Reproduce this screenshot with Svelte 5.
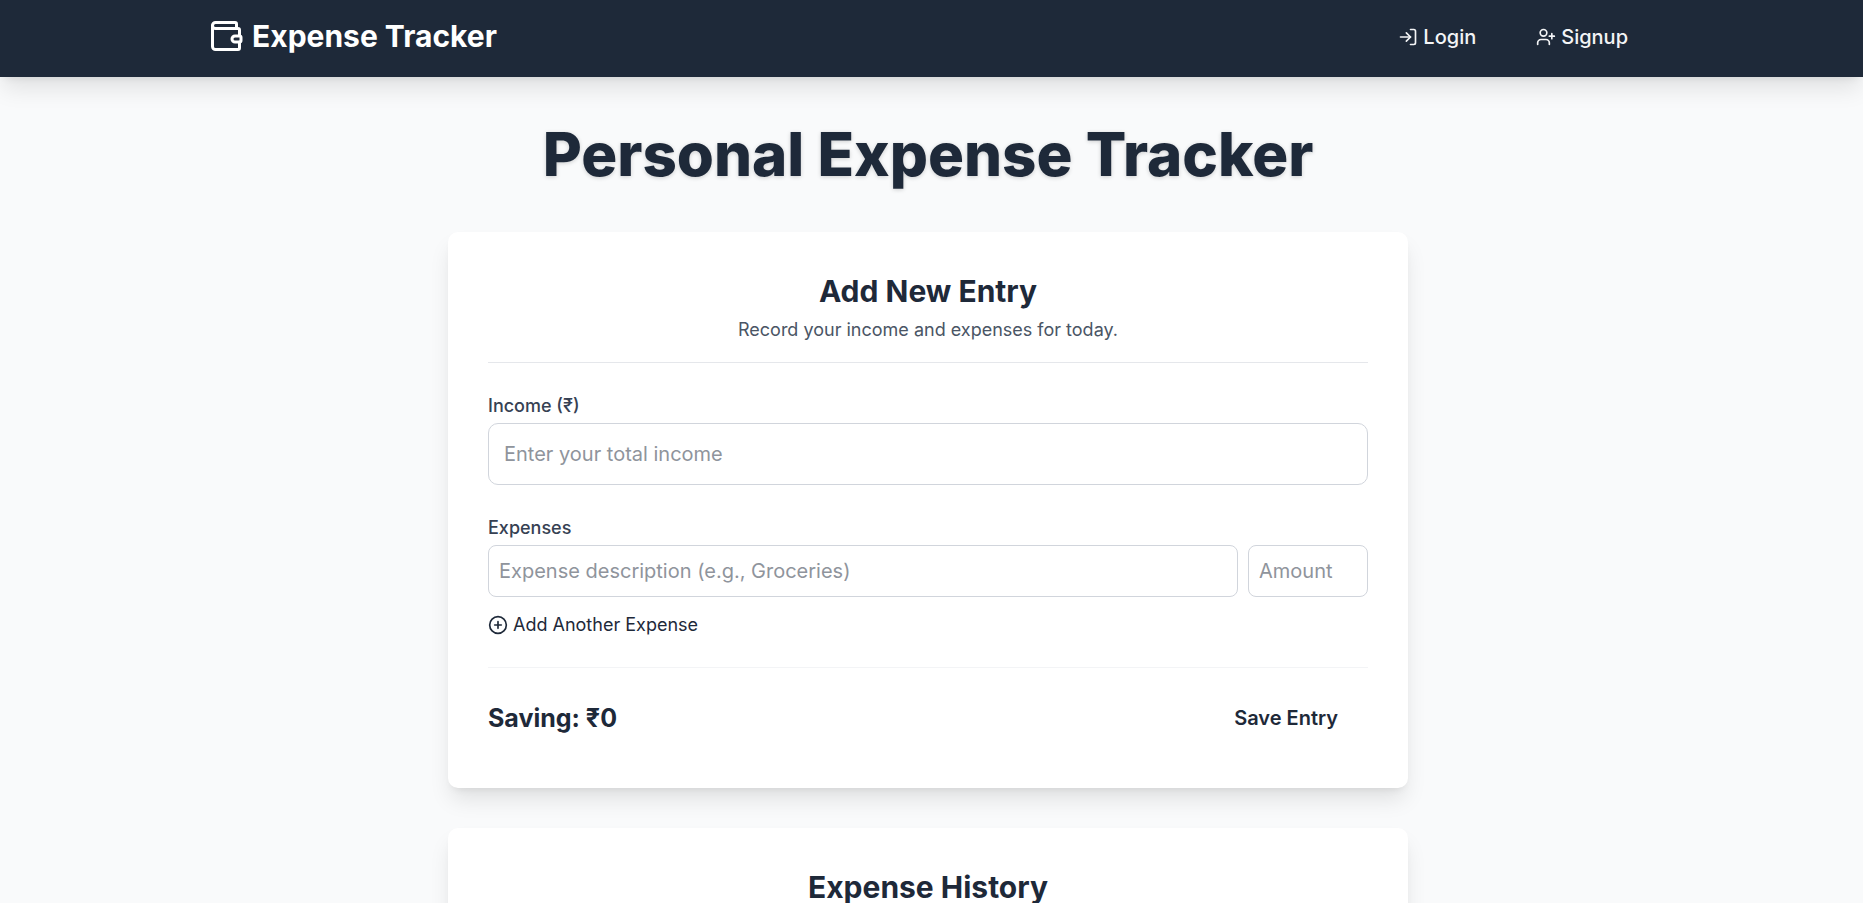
<script>
  let income = $state('');
  let expenses = $state([{ description: '', amount: '' }]);

  let saving = $derived(
    Number(income || 0) - expenses.reduce((sum, item) => sum + Number(item.amount || 0), 0)
  );

  function addExpense() {
    expenses.push({ description: '', amount: '' });
  }
</script>

<header class="topbar">
  <div class="topbar-inner">
    <a class="brand" href="#home">
      <svg class="icon brand-icon" viewBox="0 0 24 24" aria-hidden="true">
        <path d="M19 7V4a1 1 0 0 0-1-1H5a2 2 0 0 0 0 4h15a1 1 0 0 1 1 1v4h-3a2 2 0 0 0 0 4h3a1 1 0 0 0 1-1v-2a1 1 0 0 0-1-1" />
        <path d="M3 5v14a2 2 0 0 0 2 2h15a1 1 0 0 0 1-1v-4" />
      </svg>
      Expense Tracker
    </a>
    <nav class="links">
      <a class="link" href="#login">
        <svg class="icon" viewBox="0 0 24 24" aria-hidden="true">
          <path d="M15 3h4a2 2 0 0 1 2 2v14a2 2 0 0 1-2 2h-4" />
          <path d="M10 17l5-5-5-5" />
          <path d="M15 12H3" />
        </svg>
        Login
      </a>
      <a class="link" href="#signup">
        <svg class="icon" viewBox="0 0 24 24" aria-hidden="true">
          <path d="M16 21v-2a4 4 0 0 0-4-4H6a4 4 0 0 0-4 4v2" />
          <circle cx="9" cy="7" r="4" />
          <path d="M19 8v6M22 11h-6" />
        </svg>
        Signup
      </a>
    </nav>
  </div>
</header>

<main class="page">
  <h1>Personal Expense Tracker</h1>

  <section class="card">
    <div class="card-head">
      <h2>Add New Entry</h2>
      <p>Record your income and expenses for today.</p>
    </div>

    <form onsubmit={(event) => event.preventDefault()}>
      <div class="field">
        <label for="income">Income (₹)</label>
        <input id="income" class="large" type="text" inputmode="decimal" placeholder="Enter your total income" bind:value={income} />
      </div>

      <div class="field">
        <label for="expense-0">Expenses</label>
        <div class="rows">
          {#each expenses as item, i}
            <div class="row">
              <input id={`expense-${i}`} type="text" placeholder="Expense description (e.g., Groceries)" bind:value={item.description} />
              <input class="amount" type="text" inputmode="decimal" aria-label="Amount" placeholder="Amount" bind:value={item.amount} />
            </div>
          {/each}
        </div>
        <button class="add" type="button" onclick={addExpense}>
          <svg class="icon" viewBox="0 0 24 24" aria-hidden="true">
            <circle cx="12" cy="12" r="10" />
            <path d="M8 12h8M12 8v8" />
          </svg>
          Add Another Expense
        </button>
      </div>

      <div class="summary">
        <strong>Saving: ₹{saving}</strong>
        <button class="save" type="submit">Save Entry</button>
      </div>
    </form>
  </section>

  <section class="card">
    <h2>Expense History</h2>
  </section>
</main>

<style>
  :global(body) {
    background: #f9fafb;
    color: #1e2939;
    font-family: Inter, 'Noto Sans', sans-serif;
    font-size: 20px;
    line-height: 30px;
    overflow: hidden;
  }

  * {
    box-sizing: border-box;
  }

  h1,
  h2,
  p {
    margin: 0;
  }

  .icon {
    width: 20px;
    height: 20px;
    flex: none;
    fill: none;
    stroke: currentColor;
    stroke-width: 2;
    stroke-linecap: round;
    stroke-linejoin: round;
  }

  .topbar {
    padding: 18px 7px 22px 0;
    background: #1e2939;
    box-shadow: 0 14px 22px -3px rgb(0 0 0 / 0.1), 0 5px 8px -5px rgb(0 0 0 / 0.1);
  }

  .topbar-inner {
    display: flex;
    align-items: flex-start;
    justify-content: space-between;
    max-width: 1440px;
    height: 37px;
    margin: 0 auto;
  }

  .brand {
    display: flex;
    align-items: center;
    gap: 8px;
    color: #fff;
    font-size: 30px;
    font-weight: 700;
    text-decoration: none;
  }

  .brand-icon {
    width: 36px;
    height: 36px;
  }

  .links {
    display: flex;
    align-self: center;
    gap: 20px;
  }

  .link {
    display: flex;
    align-items: center;
    gap: 5px;
    padding: 0 20px;
    color: #f3f4f6;
    font-weight: 500;
    text-decoration: none;
  }

  .page {
    display: flex;
    flex-direction: column;
    align-items: center;
    gap: 40px;
    padding: 40px 7px 40px 0;
  }

  h1 {
    font-size: 60px;
    font-weight: 800;
    line-height: 75px;
    text-shadow: 0 1px 4px rgb(0 0 0 / 0.18);
  }

  .card {
    width: 100%;
    max-width: 960px;
    padding: 40px;
    border-radius: 10px;
    background: #fff;
    box-shadow: 0 14px 22px -3px rgb(0 0 0 / 0.1), 0 5px 8px -5px rgb(0 0 0 / 0.1);
  }

  .card-head {
    padding-bottom: 20px;
    border-bottom: 1px solid #e5e7eb;
    text-align: center;
  }

  h2 {
    font-size: 30px;
    font-weight: 700;
    line-height: 38px;
    text-align: center;
  }

  .card-head p {
    margin-top: 7px;
    color: #4a5565;
    font-size: 18px;
    line-height: 25px;
  }

  .field {
    margin-top: 30px;
  }

  label {
    display: block;
    margin-bottom: 5px;
    color: #364153;
    font-size: 18px;
    font-weight: 500;
    line-height: 25px;
  }

  input {
    width: 100%;
    min-width: 0;
    padding: 10px;
    border: 1px solid #d1d5dc;
    border-radius: 8px;
    background: #fff;
    color: inherit;
    font: inherit;
    height: 52px;
  }

  input::placeholder {
    color: #8f949c;
    opacity: 1;
  }

  input.large {
    height: 62px;
    padding: 15px;
    border-radius: 10px;
  }

  .rows {
    display: grid;
    gap: 10px;
  }

  .row {
    display: flex;
    gap: 10px;
  }

  .row .amount {
    flex: none;
    width: 120px;
  }

  button {
    border: 0;
    background: none;
    color: inherit;
    font: inherit;
    cursor: pointer;
  }

  .add {
    display: flex;
    align-items: center;
    gap: 5px;
    margin-top: 15px;
    padding: 0;
    font-size: 18px;
    line-height: 25px;
  }

  .summary {
    display: flex;
    align-items: center;
    justify-content: space-between;
    margin-top: 30px;
    padding-top: 20px;
    border-top: 1px solid #f3f4f6;
  }

  .summary strong {
    font-size: 25px;
    font-weight: 700;
  }

  .save {
    padding: 15px 30px;
    font-weight: 600;
  }
</style>
